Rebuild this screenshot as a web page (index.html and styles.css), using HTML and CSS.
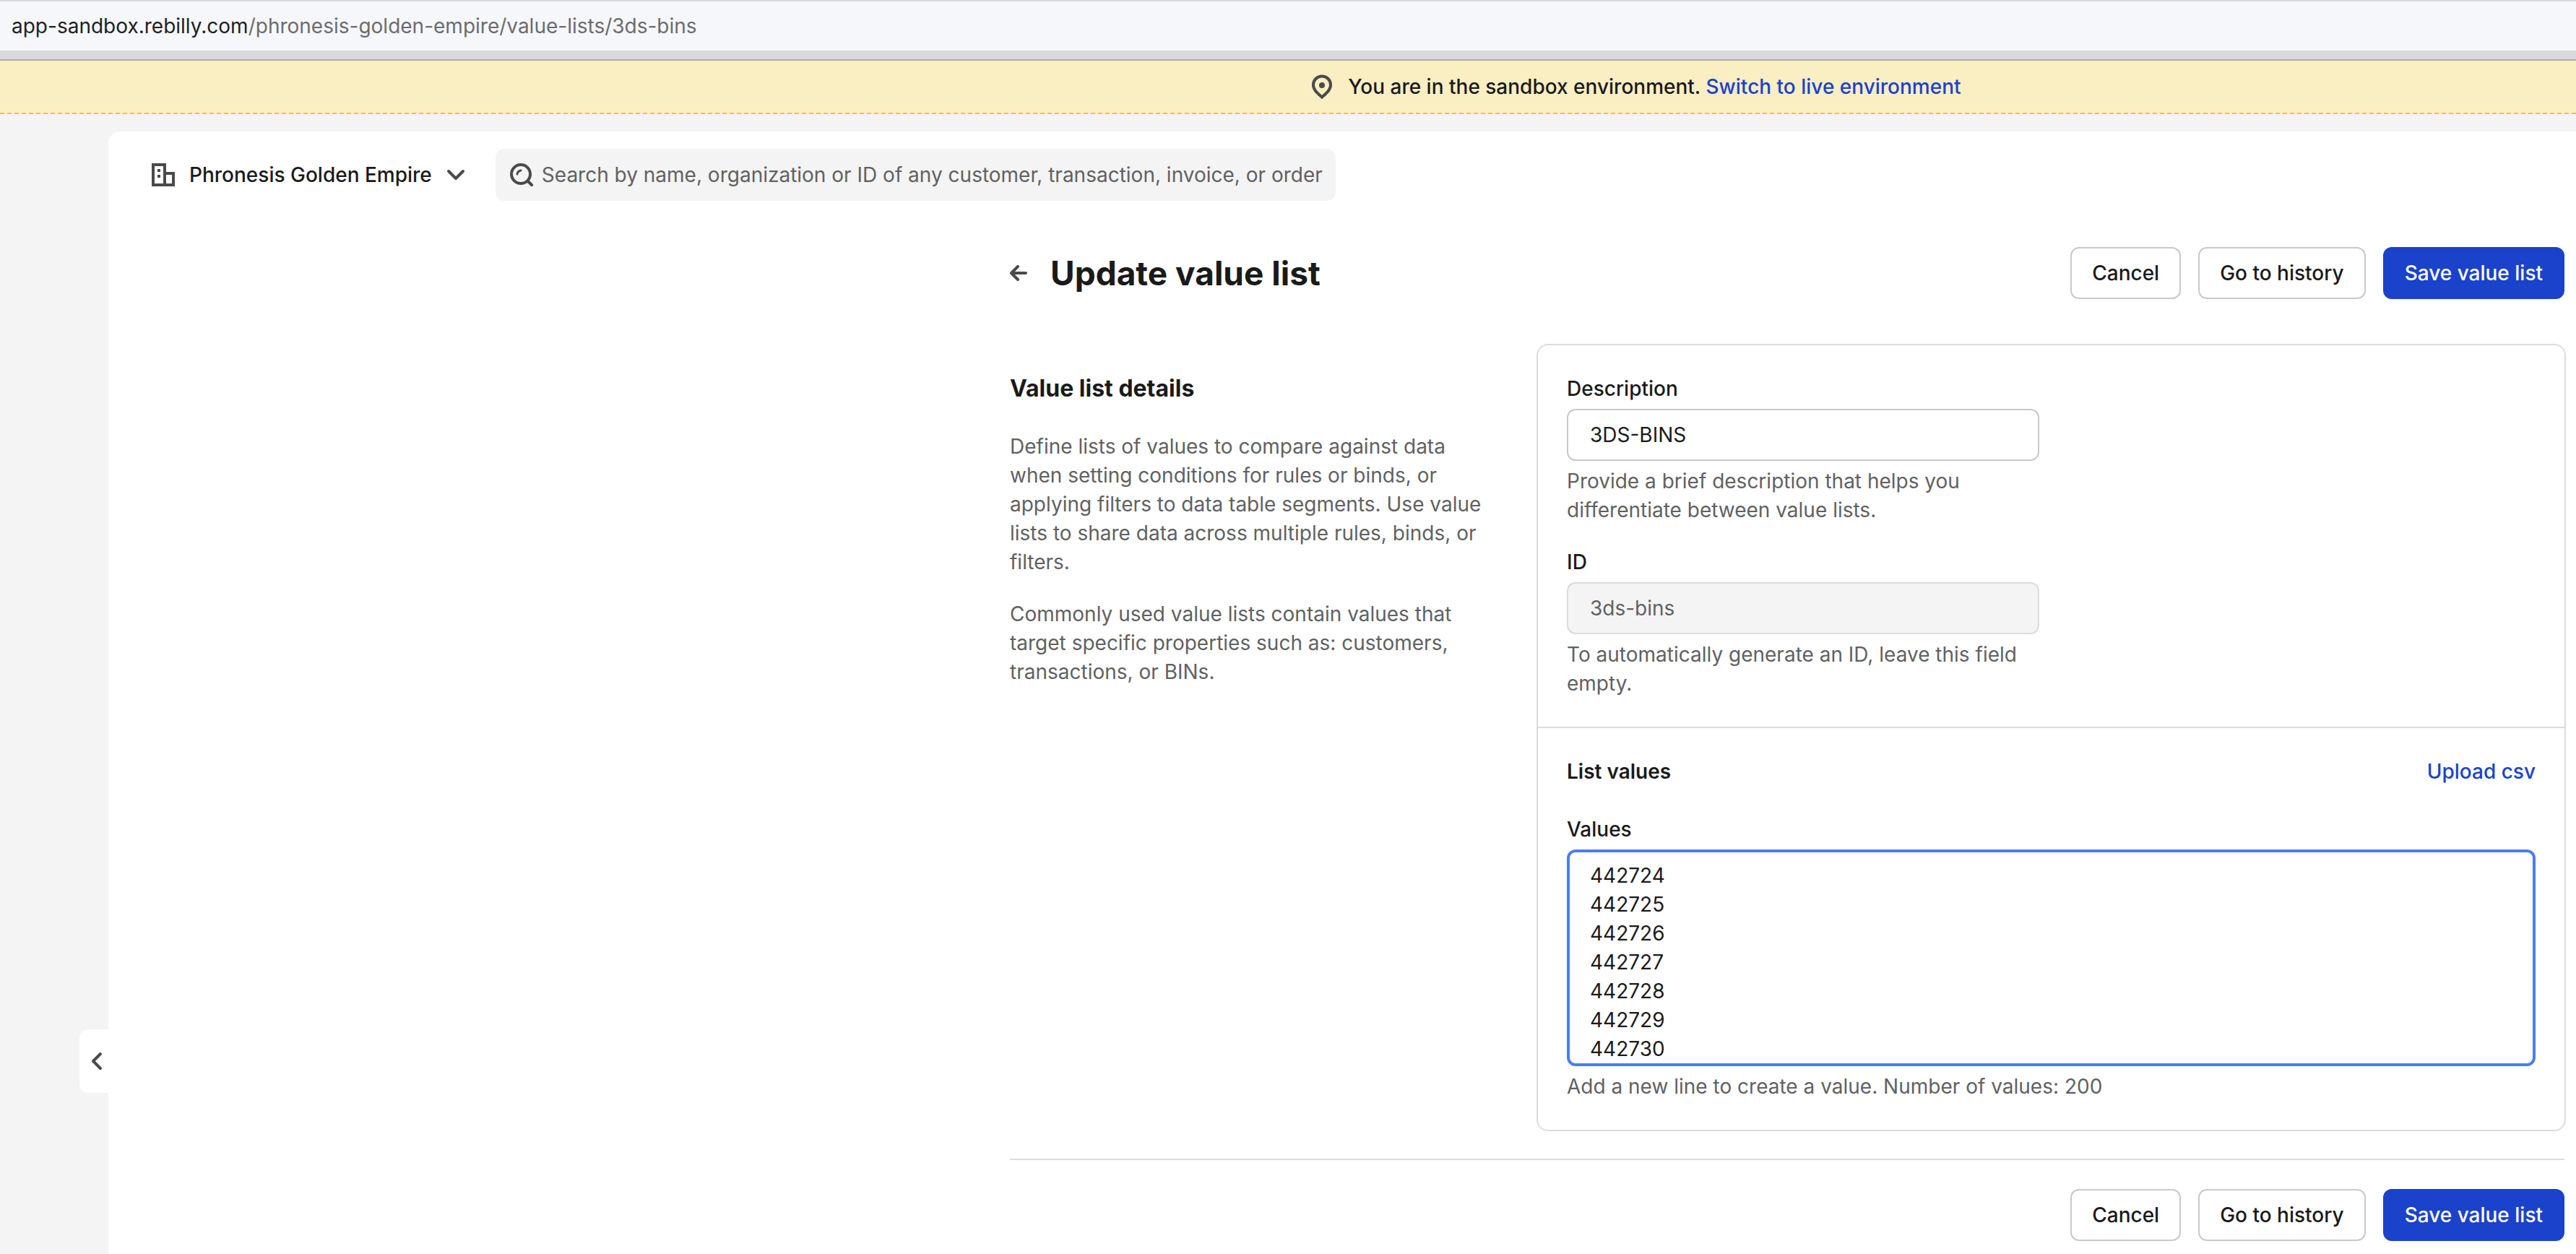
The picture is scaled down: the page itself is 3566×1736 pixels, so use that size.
FILE: index.html
```html
<!DOCTYPE html>
<html lang="en">
<head>
<meta charset="utf-8">
<title>Update value list</title>
<link rel="stylesheet" href="styles.css">
</head>
<body>
<div class="address-bar"><span class="address-host">app-sandbox.rebilly.com</span>/phronesis-golden-empire/value-lists/3ds-bins</div>

<div class="banner">
  <svg class="icon" viewBox="0 0 32 36" width="32" height="36" fill="none" stroke="#4a4a4a" stroke-width="4" aria-hidden="true">
    <path d="M16 32.500C11 28 4 23 4 15.500a12 12 0 0 1 24 0C28 23 21 28 16 32.500z"/>
    <circle cx="16" cy="16" r="4" fill="#4a4a4a" stroke="none"/>
  </svg>
  <p class="banner-text">You are in the sandbox environment. <a class="link" href="#live">Switch to live environment</a></p>
</div>

<div class="layout">
  <aside class="sidebar">
    <button class="collapse" type="button" aria-label="Toggle sidebar">
      <svg viewBox="0 0 16 26" width="16" height="26" fill="none" stroke="#4a4a4a" stroke-width="4" stroke-linecap="round" stroke-linejoin="round"><path d="M13 3 3 13l10 10"/></svg>
    </button>
  </aside>

  <main class="main">
    <header class="topbar">
      <button class="org" type="button">
        <svg class="icon" viewBox="0 0 32 32" width="32" height="32" aria-hidden="true">
          <path d="M2 2h16v28H2zM18 14h12v16H18z" fill="none" stroke="#4a4a4a" stroke-width="4"/>
          <path d="M8 8h4v4H8zM8 16h4v4H8z" fill="#4a4a4a"/>
        </svg>
        <span class="org-name">Phronesis Golden Empire</span>
        <svg class="icon" viewBox="0 0 26 16" width="26" height="16" fill="none" stroke="#4a4a4a" stroke-width="4" stroke-linecap="round" stroke-linejoin="round" aria-hidden="true"><path d="M3 3l10 10L23 3"/></svg>
      </button>
      <label class="search">
        <svg class="icon" viewBox="0 0 32 32" width="32" height="32" fill="none" stroke="#4a4a4a" stroke-width="4" stroke-linecap="round" aria-hidden="true">
          <circle cx="15" cy="15" r="13"/>
          <path d="M25 25l5 5"/>
          <path d="M10 15a6 6 0 0 1 5-5" stroke-width="3"/>
        </svg>
        <input class="search-input" type="text" aria-label="Search" placeholder="Search by name, organization or ID of any customer, transaction, invoice, or order">
      </label>
    </header>

    <form class="content">
      <div class="page-head">
        <a class="back" href="#back" aria-label="Back">
          <svg class="icon" viewBox="0 0 24 22" width="24" height="22" fill="none" stroke="#4a4a4a" stroke-width="4" stroke-linecap="round" stroke-linejoin="round"><path d="M11 2 2 11l9 9M3 11h19"/></svg>
        </a>
        <h1 class="page-title">Update value list</h1>
        <div class="actions">
          <button class="button" type="button">Cancel</button>
          <button class="button" type="button">Go to history</button>
          <button class="button button-primary" type="submit">Save value list</button>
        </div>
      </div>

      <div class="columns">
        <section class="intro">
          <h2 class="intro-title">Value list details</h2>
          <p>Define lists of values to compare against data when setting conditions for rules or binds, or applying filters to data table segments. Use value lists to share data across multiple rules, binds, or filters.</p>
          <p>Commonly used value lists contain values that target specific properties such as: customers, transactions, or BINs.</p>
        </section>

        <div class="card">
          <section class="card-section">
            <div class="field field-half">
              <label class="label" for="description">Description</label>
              <input class="input" id="description" type="text" value="3DS-BINS">
              <p class="help">Provide a brief description that helps you differentiate between value lists.</p>
            </div>
            <div class="field field-half">
              <label class="label" for="list-id">ID</label>
              <input class="input" id="list-id" type="text" value="3ds-bins" disabled>
              <p class="help">To automatically generate an ID, leave this field empty.</p>
            </div>
          </section>
          <section class="card-section">
            <div class="section-head">
              <h3 class="section-title">List values</h3>
              <a class="link" href="#upload">Upload csv</a>
            </div>
            <div class="field">
              <label class="label" for="values">Values</label>
              <textarea class="input textarea" id="values">442724
442725
442726
442727
442728
442729
442730</textarea>
              <p class="help">Add a new line to create a value. Number of values: 200</p>
            </div>
          </section>
        </div>
      </div>

      <div class="page-foot">
        <button class="button" type="button">Cancel</button>
        <button class="button" type="button">Go to history</button>
        <button class="button button-primary" type="submit">Save value list</button>
      </div>
    </form>
  </main>
</div>
</body>
</html>
```
FILE: styles.css
```css
* { box-sizing: border-box; }

body {
  margin: 0;
  min-height: 100vh;
  display: flex;
  flex-direction: column;
  background: #f4f4f4;
  color: #1a1a1a;
  font: 400 28px/40px Inter, "Liberation Sans", sans-serif;
}

h1, h2, h3, p { margin: 0; }
button, input, textarea { font: inherit; color: inherit; }
.icon { flex: none; display: block; }
.link { color: #1b42cb; font-weight: 500; text-decoration: none; }

/* Browser address strip */
.address-bar {
  height: 84px;
  padding: 14px 16px;
  background: #f6f7fa;
  border-top: 2px solid #d9dade;
  border-bottom: 2px solid #a9abaf;
  box-shadow: inset 0 -12px #d9dade;
  color: #6b6c6f;
}
.address-host { color: #202124; }

/* Sandbox notice */
.banner {
  display: flex;
  align-items: center;
  justify-content: center;
  gap: 20px;
  padding: 16px 0 16px 27%;
  background: #faeec3;
  border-bottom: 2px dashed #e9c641;
}
.banner-text { font-weight: 500; white-space: nowrap; }

.layout { flex: 1; display: flex; }

.sidebar {
  flex: none;
  width: 150px;
  display: flex;
  flex-direction: column;
  justify-content: flex-end;
  align-items: flex-end;
  padding-bottom: 223px;
}
.collapse {
  width: 40px;
  height: 88px;
  padding: 0 8px 0 16px;
  border: 0;
  border-radius: 12px 0 0 12px;
  background: #fff;
  display: flex;
  align-items: center;
}

.main {
  flex: 1;
  min-width: 0;
  margin-top: 24px;
  background: #fff;
  border-radius: 16px 0 0 0;
  padding: 24px 14px 16px 60px;
}

.topbar { display: flex; align-items: center; gap: 42px; }
.org {
  display: flex;
  align-items: center;
  gap: 20px;
  padding: 0;
  border: 0;
  background: none;
  font-weight: 500;
}
.org-name { white-space: nowrap; }
.search {
  flex: 0 1 1163px;
  height: 72px;
  padding: 0 8px 0 20px;
  display: flex;
  align-items: center;
  gap: 12px;
  border-radius: 12px;
  background: #f4f4f4;
}
.search-input {
  flex: 1;
  min-width: 0;
  padding: 0;
  border: 0;
  outline: 0;
  background: none;
}
.search-input::placeholder { color: #616161; opacity: 1; }

.content { max-width: 2154px; margin: 64px 0 0 auto; }

.page-head, .page-foot { display: flex; align-items: center; margin-right: 2px; }
.back { margin-right: 32px; }
.page-title { font-size: 46px; line-height: 64px; font-weight: 700; }
.actions { display: flex; gap: 24px; margin-left: auto; }

.button {
  height: 72px;
  padding: 0 28px;
  border: 2px solid #c9c9c9;
  border-radius: 12px;
  background: #fff;
  font-weight: 500;
  white-space: nowrap;
}
.button-primary { border-color: #1b42cb; background: #1b42cb; color: #fff; }

.columns {
  display: grid;
  grid-template-columns: 656px 1fr;
  gap: 73px;
  margin-top: 62px;
}
.intro {
  display: flex;
  flex-direction: column;
  gap: 32px;
  padding-top: 42px;
  color: #616161;
}
.intro-title { color: #1a1a1a; font-size: 32px; line-height: 40px; font-weight: 700; margin-bottom: 8px; }

.card { border: 2px solid #dcdcdc; border-radius: 16px; }
.card-section { display: flex; flex-direction: column; gap: 32px; padding: 40px; }
.card-section + .card-section { border-top: 2px solid #dcdcdc; gap: 40px; }

.field { display: flex; flex-direction: column; gap: 8px; }
.field-half { max-width: 654px; }
.label { font-weight: 500; }
.help { color: #616161; }
.input {
  width: 100%;
  height: 72px;
  padding: 0 30px;
  border: 2px solid #c9c9c9;
  border-radius: 12px;
  outline: 0;
  background: #fff;
}
.input:disabled { border-color: #dcdcdc; background: #f4f4f4; color: #616161; }
.textarea {
  display: block;
  height: 300px;
  padding: 12px 28px;
  border: 4px solid #4d7bf3;
  resize: none;
  overflow: hidden;
}

.section-head { display: flex; justify-content: space-between; align-items: center; }
.section-title { font-size: 28px; line-height: 40px; font-weight: 600; }

.page-foot {
  justify-content: flex-end;
  gap: 24px;
  margin-top: 38px;
  padding-top: 40px;
  border-top: 2px solid #dcdcdc;
}
```
